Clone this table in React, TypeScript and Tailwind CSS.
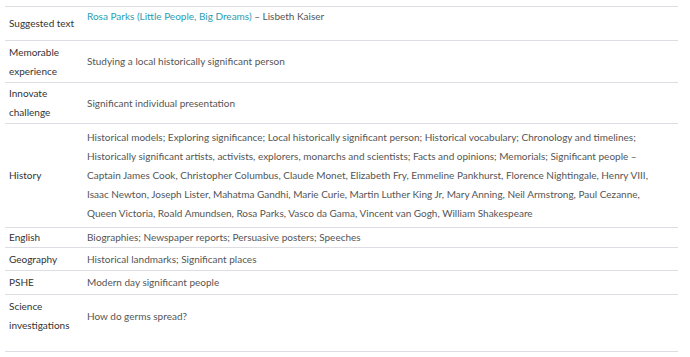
import React from "react";

type Row = {
  label: React.ReactNode;
  content: React.ReactNode;
  h: number;
  labelCls?: string;
  contentCls?: string;
};

const historyLines = [
  "Historical models; Exploring significance; Local historically significant person; Historical vocabulary; Chronology and timelines;",
  "Historically significant artists, activists, explorers, monarchs and scientists; Facts and opinions; Memorials; Significant people –",
  "Captain James Cook, Christopher Columbus, Claude Monet, Elizabeth Fry, Emmeline Pankhurst, Florence Nightingale, Henry VIII,",
  "Isaac Newton, Joseph Lister, Mahatma Gandhi, Marie Curie, Martin Luther King Jr, Mary Anning, Neil Armstrong, Paul Cezanne,",
  "Queen Victoria, Roald Amundsen, Rosa Parks, Vasco da Gama, Vincent van Gogh, William Shakespeare",
];

const rows: Row[] = [
  {
    label: "Suggested text",
    content: (
      <>
        <span className="text-[#2a9db2]">Rosa Parks (Little People, Big Dreams)</span>
        <span> – Lisbeth Kaiser</span>
      </>
    ),
    h: 33,
    contentCls: "self-start leading-[16px]",
  },
  {
    label: (
      <>
        Memorable
        <br />
        experience
      </>
    ),
    content: "Studying a local historically significant person",
    h: 41,
  },
  {
    label: (
      <>
        Innovate
        <br />
        challenge
      </>
    ),
    content: "Significant individual presentation",
    h: 40,
  },
  {
    label: "History",
    content: (
      <div>
        {historyLines.map((l, i) => (
          <div key={i}>{l}</div>
        ))}
      </div>
    ),
    h: 103,
  },
  {
    label: "English",
    content: "Biographies; Newspaper reports; Persuasive posters; Speeches",
    h: 19,
  },
  {
    label: "Geography",
    content: "Historical landmarks; Significant places",
    h: 22,
  },
  {
    label: "PSHE",
    content: "Modern day significant people",
    h: 23,
  },
  {
    label: (
      <>
        Science
        <br />
        investigations
      </>
    ),
    content: "How do germs spread?",
    h: 56,
    labelCls: "pb-[14px]",
    contentCls: "pb-[14px]",
  },
];

export default function App() {
  return (
    <div
      className="w-[690px] h-[357px] bg-white pt-[6px] pl-[5px] pr-[12px]"
      style={{ fontFamily: "Lato, 'Noto Sans', sans-serif" }}
    >
      <div className="border-t border-[#dedde3]">
        {rows.map((r, i) => (
          <div
            key={i}
            className="flex border-b border-[#dedde3]"
            style={{ height: r.h + 1 }}
          >
            <div
              className={`w-[82px] shrink-0 pl-[4px] flex items-center text-[10px] leading-[19px] text-[#333333] ${r.labelCls ?? ""}`}
            >
              <div>{r.label}</div>
            </div>
            <div
              className={`flex-1 flex items-center text-[10px] leading-[19px] text-[#555555] whitespace-nowrap ${r.contentCls ?? ""}`}
            >
              <div>{r.content}</div>
            </div>
          </div>
        ))}
      </div>
    </div>
  );
}
